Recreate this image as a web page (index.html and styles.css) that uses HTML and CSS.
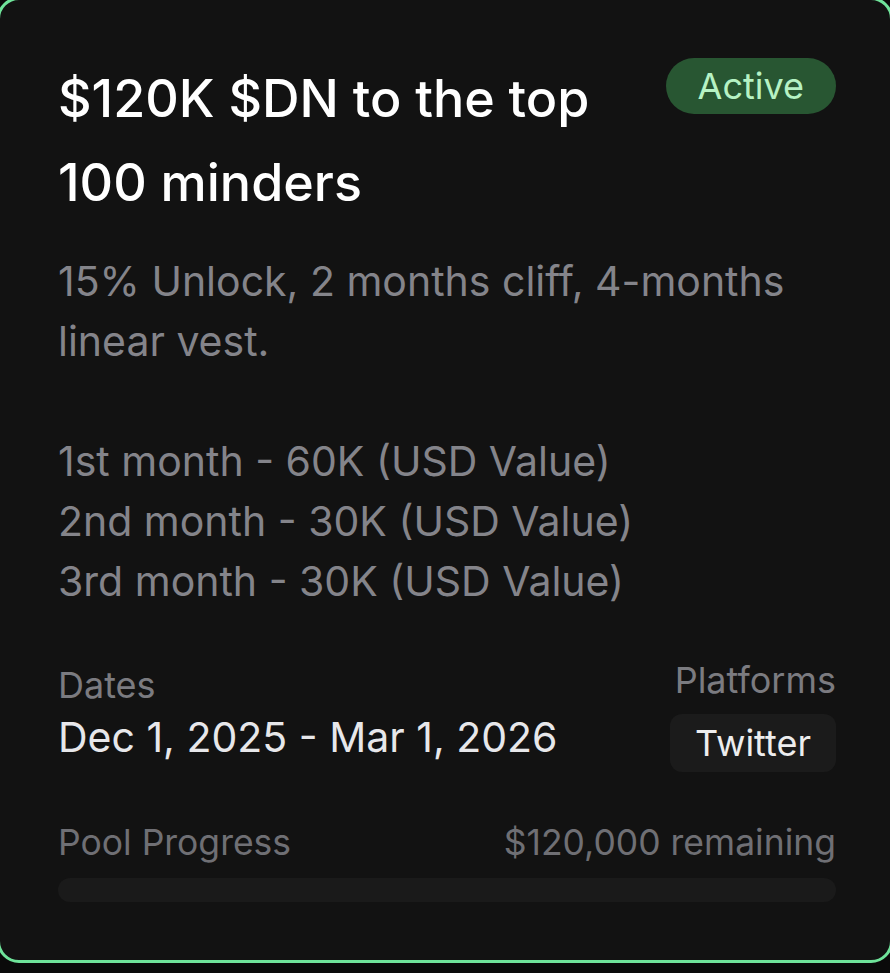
FILE: index.html
```html
<!DOCTYPE html>
<html lang="en">
<head>
    <meta charset="UTF-8">
    <meta name="viewport" content="width=device-width, initial-scale=1.0">
    <title>Reward Pool</title>
    <link rel="stylesheet" href="styles.css">
</head>
<body>

    <div class="card">
        <div class="card-head">
            <h1 class="title">$120K $DN to the top 100 minders</h1>
            <span class="badge">Active</span>
        </div>

        <p class="desc">15% Unlock, 2 months cliff, 4-months
linear vest.

1st month - 60K (USD Value)
2nd month - 30K (USD Value)
3rd month - 30K (USD Value)</p>

        <div class="meta">
            <div class="meta-col left">
                <div class="label">Dates</div>
                <div class="value">Dec 1, 2025 - Mar 1, 2026</div>
            </div>
            <div class="meta-col right">
                <div class="label">Platforms</div>
                <span class="chip">Twitter</span>
            </div>
        </div>

        <div class="pool">
            <div class="pool-row">
                <span>Pool Progress</span>
                <span>$120,000 remaining</span>
            </div>
            <div class="track"><div class="fill" style="width: 0%"></div></div>
        </div>
    </div>

</body>
</html>
```

FILE: styles.css
```css
body {
    font-family: Inter, "Noto Sans", sans-serif;
    background-color: #0a0a0a;
    margin: 0;
    overflow: hidden;
}
.card {
    box-sizing: border-box;
    width: 896px;
    height: 966px;
    margin: -3px 0 0 -3px;
    background-color: #121212;
    border: 3px solid #6fe39a;
    border-radius: 22px;
    padding: 57px 54px 0 58px;
}
.card-head {
    display: flex;
    justify-content: space-between;
    align-items: flex-start;
}
.title {
    margin: 0;
    max-width: 580px;
    font-size: 52px;
    font-weight: 500;
    line-height: 84px;
    color: #ffffff;
}
.badge {
    margin-top: 1px;
    background-color: #285632;
    color: #b6f2c4;
    font-size: 36px;
    line-height: 56px;
    padding: 0 32px;
    border-radius: 28px;
}
.desc {
    margin: 26px 0 0;
    white-space: pre-line;
    color: #84848a;
    font-size: 41px;
    line-height: 60px;
}
.meta {
    display: flex;
    justify-content: space-between;
    align-items: flex-start;
    margin-top: 49px;
}
.meta-col.left {
    margin-top: 5px;
}
.meta-col.right {
    display: flex;
    flex-direction: column;
    align-items: flex-end;
}
.label {
    color: #7b7b80;
    font-size: 36px;
    line-height: 40px;
}
.value {
    margin-top: 5px;
    color: #e7e7ea;
    font-size: 41px;
    line-height: 54px;
}
.chip {
    margin-top: 14px;
    background-color: #1b1b1b;
    color: #ededee;
    font-size: 36px;
    line-height: 58px;
    padding: 0 25px;
    border-radius: 12px;
}
.pool {
    margin-top: 49px;
}
.pool-row {
    display: flex;
    justify-content: space-between;
    color: #6f6f74;
    font-size: 35.5px;
    line-height: 44px;
}
.track {
    margin-top: 13px;
    height: 24px;
    border-radius: 12px;
    background-color: #1a1a1a;
}
.fill {
    height: 100%;
    border-radius: 12px;
    background-color: #6fe39a;
}
```
